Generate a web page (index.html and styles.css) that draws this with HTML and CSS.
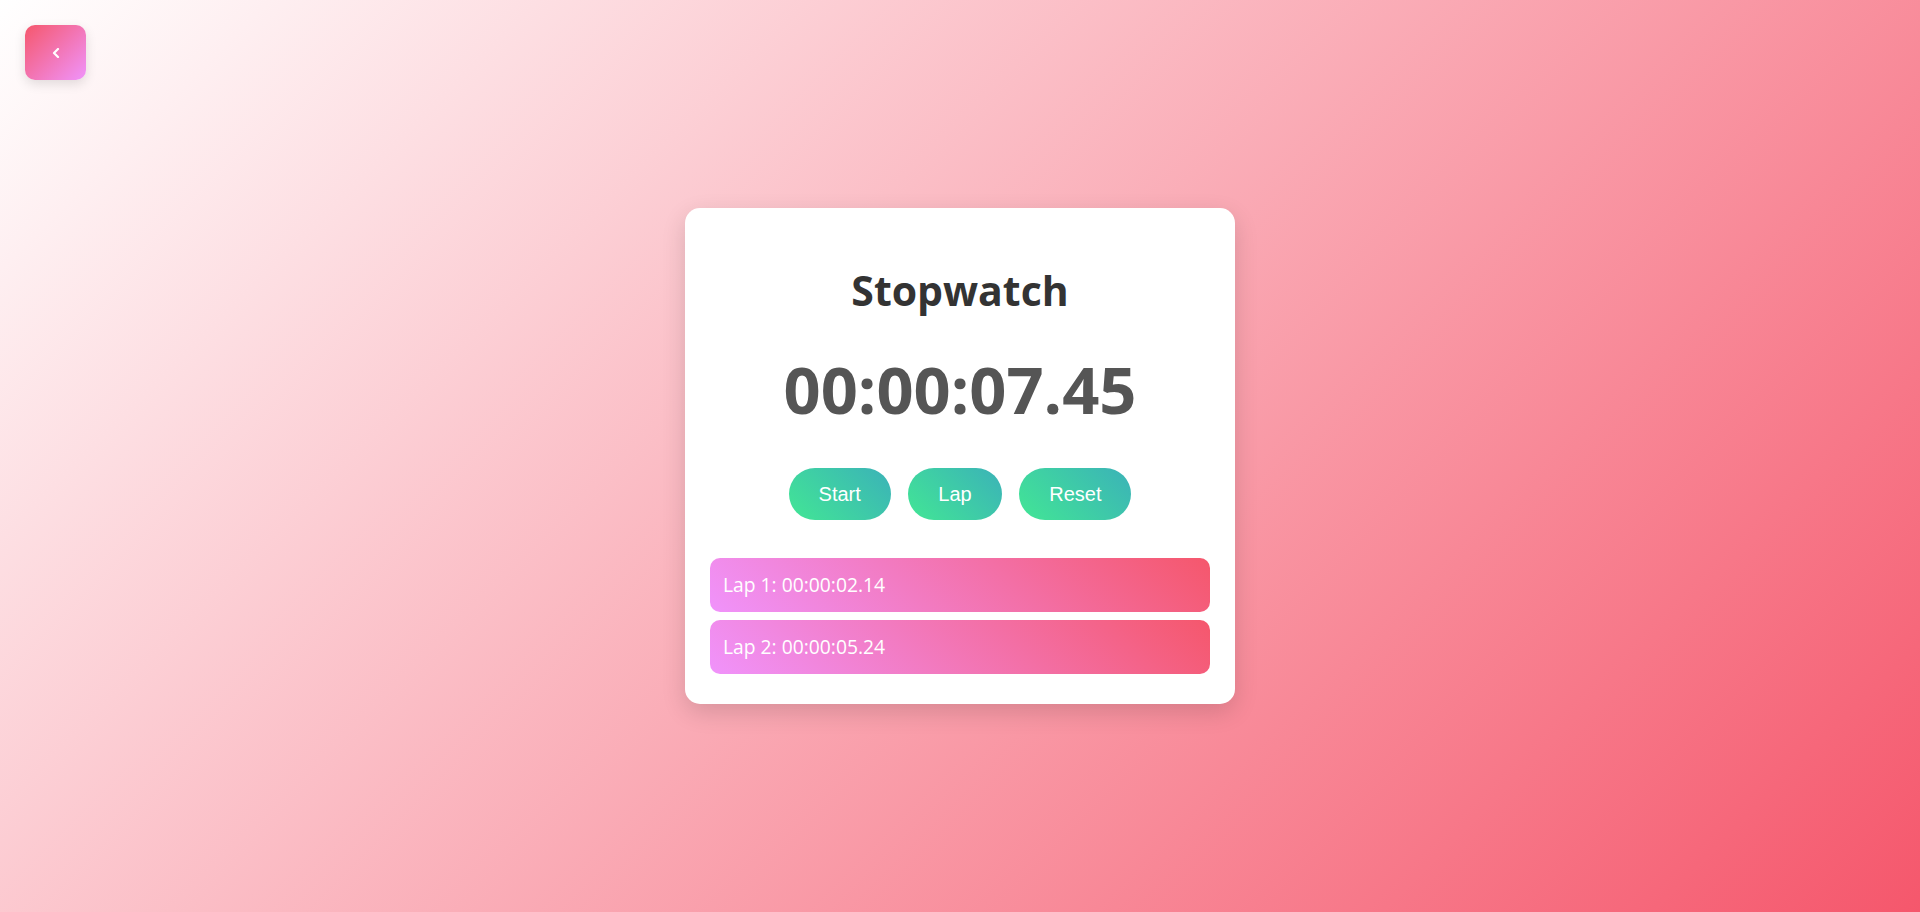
FILE: index.html
```html
<!DOCTYPE html>
<html lang="en">
<head>
<meta charset="UTF-8">
<title>Stopwatch</title>
<link rel="stylesheet" href="styles.css">
</head>
<body>
<a class="back-btn" href="#" aria-label="Back">
  <svg width="8" height="10" viewBox="0 0 8 10"><path d="M6 1 L2 5 L6 9" fill="none" stroke="#fff" stroke-width="2.2" stroke-linecap="round" stroke-linejoin="round"/></svg>
</a>
<main class="card">
  <h1 class="title">Stopwatch</h1>
  <div class="time">00:00:07.45</div>
  <div class="controls">
    <button class="btn">Start</button>
    <button class="btn">Lap</button>
    <button class="btn">Reset</button>
  </div>
  <ul class="laps">
    <li class="lap">Lap 1: 00:00:02.14</li>
    <li class="lap">Lap 2: 00:00:05.24</li>
  </ul>
</main>
</body>
</html>
```
FILE: styles.css
```css
* { box-sizing: border-box; }
html, body { height: 100%; }
body {
  margin: 0;
  min-height: 100vh;
  display: flex;
  align-items: center;
  justify-content: center;
  font-family: "Open Sans", "Liberation Sans", sans-serif;
  background: linear-gradient(135deg, #ffffff 0%, #f5576c 100%);
}
.back-btn {
  position: absolute;
  top: 25px;
  left: 25px;
  width: 61px;
  height: 55px;
  border-radius: 10px;
  display: flex;
  align-items: center;
  justify-content: center;
  background: linear-gradient(135deg, #f5576c 0%, #f093fb 100%);
  box-shadow: 0 4px 12px rgba(0,0,0,0.12);
}
.card {
  width: 550px;
  background: #fff;
  border-radius: 15px;
  padding: 30px 25px 30px;
  box-shadow: 0 8px 25px rgba(0,0,0,0.14);
  text-align: center;
}
.title {
  margin: 27px 0 0;
  font-size: 41px;
  line-height: 50px;
  font-weight: 700;
  color: #333;
}
.time {
  margin-top: 34px;
  font-size: 65px;
  line-height: 80px;
  font-weight: 700;
  color: #555;
}
.controls {
  margin-top: 39px;
  display: flex;
  justify-content: center;
  gap: 17.5px;
}
.btn {
  border: none;
  border-radius: 50px;
  padding: 14.5px 30px;
  font-family: "Liberation Sans", Arial, sans-serif;
  font-size: 20px;
  line-height: 23px;
  color: #fff;
  background: linear-gradient(45deg, #42e695 0%, #3bb2b8 100%);
  cursor: pointer;
}
.laps {
  list-style: none;
  margin: 38px 0 0;
  padding: 0;
  display: flex;
  flex-direction: column;
  gap: 8px;
  text-align: left;
}
.lap {
  padding: 15px 13px;
  font-size: 19.3px;
  line-height: 24px;
  color: #fff;
  border-radius: 10px;
  background: linear-gradient(45deg, #f093fb 0%, #f5576c 100%);
}
```
